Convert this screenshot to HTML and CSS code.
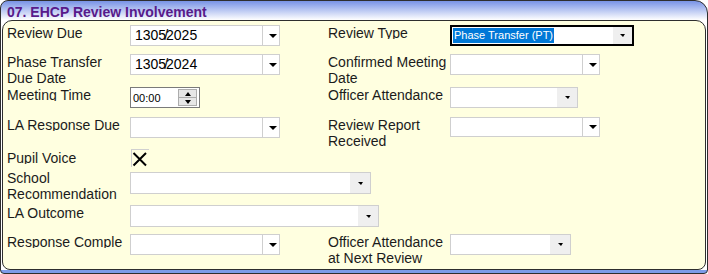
FILE: index.html
```html
<!DOCTYPE html>
<html>

<head>
    <title>EHCP Review Involvement</title>
    <link rel="stylesheet" href="styles.css">
</head>

<body>
    <div class="frame">
        <div class="title">07. EHCP Review Involvement</div>

        <div class="panel">
            <div class="row h29">
                <div class="lbl clip">Review Due</div>
                <div class="date"><span class="val">1305<span class="sl">/</span>2025</span><span class="btn"><i class="tri"></i></span></div>
                <div class="lbl clip">Review Type</div>
                <div class="combo focus w184"><span class="sel">Phase Transfer (PT)</span><span class="gbtn"><i class="tri-s"></i></span></div>
            </div>

            <div class="row h33">
                <div class="lbl">Phase Transfer<br>Due Date</div>
                <div class="date"><span class="val">1305<span class="sl">/</span>2024</span><span class="btn"><i class="tri"></i></span></div>
                <div class="lbl">Confirmed Meeting<br>Date</div>
                <div class="date"><span class="val"></span><span class="btn"><i class="tri"></i></span></div>
            </div>

            <div class="row h30">
                <div class="lbl clip">Meeting Time</div>
                <div class="spin">
                    <span class="time">00:00</span>
                    <span class="spinbtn"><span class="half"><i class="up"></i></span><span class="half"><i class="down"></i></span></span>
                </div>
                <div class="lbl clip">Officer Attendance</div>
                <div class="combo w128"><span class="gbtn"><i class="tri-s"></i></span></div>
            </div>

            <div class="row h33">
                <div class="lbl clip">LA Response Due</div>
                <div class="date"><span class="val"></span><span class="btn"><i class="tri"></i></span></div>
                <div class="lbl">Review Report<br>Received</div>
                <div class="date short"><span class="val"></span><span class="btn"><i class="tri"></i></span></div>
            </div>

            <div class="row h20">
                <div class="lbl clip">Pupil Voice</div>
                <div class="check">
                    <svg width="17" height="17" viewBox="0 0 17 17">
                        <path d="M1.5 3 L14 15.5 M14 3 L1.5 15.5" stroke="#000" stroke-width="2" fill="none" />
                    </svg>
                </div>
            </div>

            <div class="row h35">
                <div class="lbl">School<br>Recommendation</div>
                <div class="combo wide w241 low"><span class="gbtn"><i class="tri-s"></i></span></div>
            </div>

            <div class="row h29">
                <div class="lbl clip">LA Outcome</div>
                <div class="combo wide w249 tall"><span class="gbtn"><i class="tri-s"></i></span></div>
            </div>

            <div class="row">
                <div class="lbl clip">Response Comple</div>
                <div class="date"><span class="val"></span><span class="btn"><i class="tri"></i></span></div>
                <div class="lbl">Officer Attendance<br>at Next Review</div>
                <div class="combo w121"><span class="gbtn"><i class="tri-s"></i></span></div>
            </div>
        </div>
    </div>
</body>

</html>
```

FILE: styles.css
```css
body {
    margin: 0;
    font-family: "Liberation Sans", Arial, sans-serif;
    background-color: #fff;
}

.frame {
    width: 706px;
    height: 272px;
    border: 1px solid #2e2e2e;
    border-radius: 8px 13px 4px 4px;
    overflow: hidden;
    background: linear-gradient(to bottom, #7893e6 0, #ffffff 19px, #ffffff 269px, #7c9be8 269px);
}

.title {
    height: 16px;
    padding: 3px 0 0 6px;
    font-size: 14px;
    font-weight: bold;
    line-height: 16px;
    color: #581a8a;
}

.panel {
    box-sizing: border-box;
    height: 250px;
    margin: 0 1px;
    padding: 4px 0 0 4px;
    border: 1px solid #2e2e2e;
    border-radius: 10px 10px 8px 8px;
    background-color: #ffffe0;
}

.row {
    display: grid;
    grid-template-columns: 123px 198px 122px 1fr;
    align-items: start;
}

.h20 { height: 20px; }
.h29 { height: 29px; }
.h30 { height: 30px; }
.h33 { height: 33px; }
.h35 { height: 35px; }

.lbl {
    font-size: 14px;
    line-height: 16px;
    color: #1b1b1b;
    white-space: nowrap;
}

/* single line labels lose their descenders */
.clip {
    height: 14px;
    overflow: hidden;
}

/* date picker style */
.date {
    box-sizing: border-box;
    display: flex;
    width: 150px;
    height: 21px;
    border: 1px solid #cfcfcf;
    background-color: #fff;
}

.date .val {
    flex: 1;
    padding-left: 4px;
    font-size: 14px;
    line-height: 19px;
    color: #000;
}

.sl {
    margin: 0 -2px;
}

.date .btn {
    display: flex;
    align-items: center;
    width: 10px;
    padding-left: 6px;
    border-left: 1px solid #cfcfcf;
}

.tri {
    width: 0;
    height: 0;
    border-left: 4px solid transparent;
    border-right: 4px solid transparent;
    border-top: 4px solid #000;
}

.date.short {
    height: 20px;
}

/* dropdown with grey button */
.combo {
    box-sizing: border-box;
    display: flex;
    height: 21px;
    border: 1px solid #cfcfcf;
    background-color: #fff;
}

.combo .gbtn {
    display: flex;
    align-items: center;
    justify-content: center;
    width: 20px;
    margin-left: auto;
    background-color: #efefef;
}

.tri-s {
    width: 0;
    height: 0;
    border-left: 3px solid transparent;
    border-right: 2px solid transparent;
    border-top: 3px solid #000;
}

.combo.focus {
    border: 2px solid #000;
}

.combo.focus .gbtn {
    width: 19px;
}

.sel {
    align-self: flex-start;
    margin: 1px 0 0 1px;
    padding: 0 1px;
    background-color: #0078d7;
    color: #fff;
    font-size: 11px;
    line-height: 15px;
}

.w121 { width: 121px; }
.w128 { width: 128px; }
.w184 { width: 184px; }
.w241 { width: 241px; }
.w249 { width: 249px; }

.wide {
    grid-column: 2 / 5;
}

.low {
    height: 22px;
    margin-top: 2px;
}

.tall {
    height: 22px;
}

/* time spinner */
.spin {
    box-sizing: border-box;
    display: flex;
    align-items: center;
    width: 70px;
    height: 21px;
    padding: 0 2px 0 2px;
    border: 1px solid #7a7a7a;
    background-color: #fff;
}

.time {
    font-size: 11px;
    color: #000;
}

.spinbtn {
    box-sizing: border-box;
    display: flex;
    flex-direction: column;
    width: 19px;
    height: 17px;
    margin-left: auto;
    border: 1px solid #acacac;
    background-color: #e6e6e6;
}

.half {
    display: flex;
    flex: 1;
    align-items: center;
    justify-content: center;
}

.half + .half {
    border-top: 1px solid #acacac;
}

.up {
    width: 0;
    height: 0;
    border-left: 3px solid transparent;
    border-right: 3px solid transparent;
    border-bottom: 4px solid #000;
}

.down {
    width: 0;
    height: 0;
    border-left: 3px solid transparent;
    border-right: 3px solid transparent;
    border-top: 4px solid #000;
}

.check {
    width: 17px;
    height: 17px;
    margin: -1px 0 0 1px;
    border-top: 1px solid #d0d0d0;
    border-left: 1px solid #d0d0d0;
}

.check svg {
    display: block;
}
```
